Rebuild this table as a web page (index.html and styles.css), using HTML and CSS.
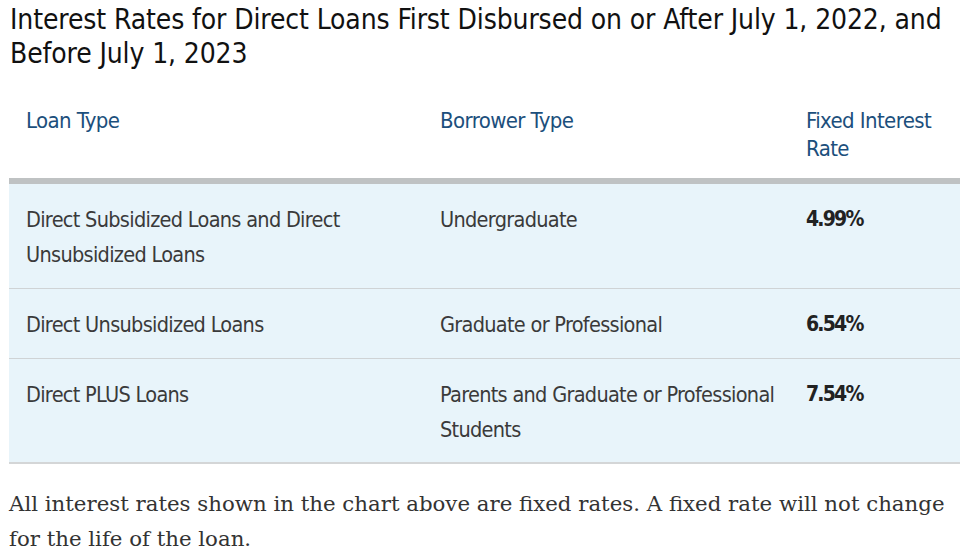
FILE: index.html
```html
<!DOCTYPE html>
<html lang="en">
<head>
<meta charset="utf-8">
<title>Interest Rates</title>
<link rel="stylesheet" href="styles.css">
</head>
<body>
<main class="page">
  <h2 class="title">Interest Rates for Direct Loans First Disbursed on or After July 1, 2022, and Before July 1, 2023</h2>
  <table class="rates">
    <thead>
      <tr>
        <th class="c1">Loan Type</th>
        <th class="c2">Borrower Type</th>
        <th class="c3">Fixed Interest Rate</th>
      </tr>
    </thead>
    <tbody>
      <tr>
        <td>Direct Subsidized Loans and Direct Unsubsidized Loans</td>
        <td>Undergraduate</td>
        <td class="rate">4.99%</td>
      </tr>
      <tr>
        <td>Direct Unsubsidized Loans</td>
        <td>Graduate or Professional</td>
        <td class="rate">6.54%</td>
      </tr>
      <tr>
        <td>Direct PLUS Loans</td>
        <td>Parents and Graduate or Professional Students</td>
        <td class="rate">7.54%</td>
      </tr>
    </tbody>
  </table>
  <p class="note">All interest rates shown in the chart above are fixed rates. A fixed rate will not change for the life of the loan.</p>
</main>
</body>
</html>
```

FILE: styles.css
```css
html, body {
  margin: 0;
  padding: 0;
  background: #ffffff;
}

.page {
  padding: 0 14px 0 9px;
}

.title {
  margin: 0;
  padding: 3px 0 0 1px;
  font-family: "DejaVu Sans Condensed", "DejaVu Sans", sans-serif;
  font-stretch: condensed;
  font-weight: normal;
  font-size: 28px;
  letter-spacing: -0.12px;
  line-height: 34px;
  color: #111111;
}

.rates {
  width: 951px;
  margin-top: 18px;
  border-collapse: collapse;
  table-layout: fixed;
  font-family: "DejaVu Sans Condensed", "DejaVu Sans", sans-serif;
  font-stretch: condensed;
}

.rates th {
  text-align: left;
  vertical-align: top;
  font-weight: normal;
  font-size: 22px;
  letter-spacing: -0.6px;
  line-height: 28px;
  color: #1c4f7c;
  padding: 18px 10px 15px 17px;
  border-bottom: 6px solid #bfc2c3;
}

.rates .c1 { width: 387px; }
.rates .c2 { width: 339px; }

.rates td {
  vertical-align: top;
  background: #e8f4fa;
  font-size: 21.5px;
  letter-spacing: -0.7px;
  line-height: 35px;
  color: #3a3a3a;
  padding: 18px 10px 16px 17px;
  border-bottom: 1px solid #cfd3d5;
}

.rates tbody tr:last-child td {
  padding-bottom: 15px;
  border-bottom: 2px solid #d4d6d7;
}

.rates .rate {
  font-weight: bold;
  font-size: 21px;
  letter-spacing: -1.8px;
  color: #222222;
}

.note {
  margin: 22px 0 0 0;
  font-family: "DejaVu Serif", "Liberation Serif", serif;
  font-size: 21.3px;
  line-height: 35px;
  color: #333333;
}
```
